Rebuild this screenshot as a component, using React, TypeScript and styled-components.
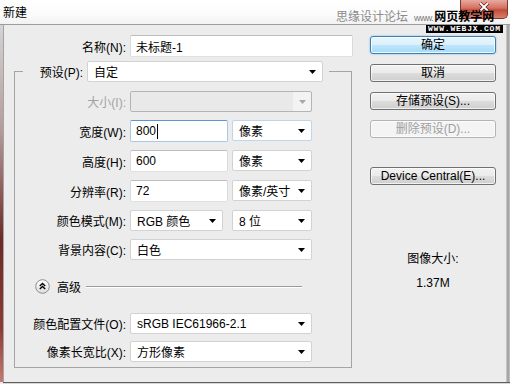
import styled, { createGlobalStyle, css } from "styled-components";

const GlobalStyle = createGlobalStyle`
  html, body { margin: 0; padding: 0; }
  body {
    font-family: "Liberation Sans", "Noto Sans CJK SC", sans-serif;
    font-size: 12px;
    color: #000;
    background: #ececec;
  }
  * { box-sizing: border-box; }
`;

const Window = styled.div`
  position: relative;
  width: 510px;
  height: 384px;
  display: flex;
  flex-direction: column;
  background: #ececec;
  overflow: hidden;
`;

const TitleBar = styled.div`
  flex: none;
  height: 25px;
  display: flex;
  align-items: flex-start;
  padding-left: 3px;
  background: linear-gradient(#ffffff, #fbfbfb 60%, #f2f2f2);
  border-bottom: 1px solid #9c9c9c;
`;

const Title = styled.span`
  line-height: 24px;
  font-size: 12px;
  padding-top: 1px;
`;

const CloseButton = styled.div`
  margin-left: auto;
  margin-right: 2px;
  width: 48px;
  height: 19px;
  display: flex;
  align-items: flex-start;
  justify-content: center;
  padding-top: 2px;
  border: 1px solid #7a3a34;
  border-top: none;
  border-radius: 0 0 5px 5px;
  background: linear-gradient(#e8a99f, #d47060 45%, #c24a38 55%, #d9806c);
`;

const Watermark = styled.div`
  position: absolute;
  left: 336px;
  top: 7px;
  display: flex;
  align-items: baseline;
  white-space: nowrap;
`;

const MarkGrey = styled.span`
  color: #8a8a8a;
  font-size: 12px;
`;

const MarkSmall = styled.span`
  color: #7c7c7c;
  font-size: 9px;
  margin: 0 1px 0 6px;
  letter-spacing: -0.6px;
`;

const MarkBlack = styled.span`
  color: #000;
  font-size: 12px;
  font-weight: bold;
`;

const MarkBar = styled.div`
  position: absolute;
  left: 426px;
  top: 25px;
  height: 8px;
  padding: 0 2px;
  background: #000;
  color: #fff;
  font-family: "Liberation Mono", monospace;
  font-weight: bold;
  font-size: 8px;
  line-height: 8px;
  letter-spacing: 0.8px;
`;

const Frame = styled.div`
  flex: 1;
  display: flex;
  min-height: 0;
`;

const LeftEdge = styled.div`
  flex: none;
  width: 3px;
  background: linear-gradient(#d4d4d4, #b49a98 30%, #6e2a26 60%, #8e3a34 85%, #c67a70);
`;

const RightEdge = styled.div`
  flex: none;
  width: 4px;
  background: linear-gradient(90deg, #d0d0d0, #9a9a9a 50%, #c8c8c8);
`;

const BottomEdge = styled.div`
  flex: none;
  height: 2px;
  margin-left: 3px;
  border-top: 1px solid #5e5e5e;
  background: #d8d8d8;
`;

const Body = styled.div`
  flex: 1;
  display: flex;
  border-left: 1px solid #a4a4a4;
  padding: 10px 0 0 10px;
`;

const LeftCol = styled.div`
  flex: none;
  width: 338px;
  display: flex;
  flex-direction: column;
`;

const Row = styled.div<{ $indent?: number }>`
  display: flex;
  align-items: center;
  gap: 4px;
  padding-left: ${(p) => p.$indent ?? 0}px;
`;

const Label = styled.span<{ $width?: number; $disabled?: boolean }>`
  flex: none;
  width: ${(p) => p.$width ?? 111}px;
  text-align: right;
  white-space: nowrap;
  color: ${(p) => (p.$disabled ? "#a3a3a3" : "#000")};
`;

const Field = styled.div<{ $width: number; $focus?: boolean }>`
  flex: none;
  width: ${(p) => p.$width}px;
  height: 22px;
  display: flex;
  align-items: center;
  padding-left: 5px;
  background: #fff;
  border: 1px solid;
  border-color: ${(p) =>
    p.$focus ? "#5e95cf #a8c8e8 #a8c8e8 #a8c8e8" : "#bdbdbd #dadada #e0e0e0 #dadada"};
  border-radius: 2px;
`;

const Caret = styled.span`
  display: inline-block;
  width: 1px;
  height: 15px;
  margin-left: 1px;
  background: #000;
`;

const Select = styled.div<{ $width: number; $focus?: boolean }>`
  flex: none;
  width: ${(p) => p.$width}px;
  height: 21px;
  display: flex;
  align-items: center;
  justify-content: space-between;
  padding: 0 6px 0 6px;
  background: #fff;
  border: 1px solid ${(p) => (p.$focus ? "#bcd6ec" : "#d2d2d2")};
  border-radius: 2px;
  white-space: nowrap;
`;

const DisabledSelect = styled.div`
  flex: none;
  width: 182px;
  height: 21px;
  display: flex;
  align-items: stretch;
  border: 1px solid #b4b4b4;
  border-radius: 2px;
  background: #f3f3f3;
`;

const DisabledInner = styled.div`
  flex: 1;
  background: #e9e9e9;
`;

const ArrowCell = styled.div`
  flex: none;
  width: 18px;
  display: flex;
  align-items: center;
  justify-content: center;
`;

const Pair = styled.div`
  flex: none;
  width: 182px;
  display: flex;
  justify-content: space-between;
`;

const Group = styled.fieldset`
  margin: 4px 0 0;
  padding: 0 0 5px;
  width: 338px;
  min-width: 0;
  border: 1px solid #a4a4a4;
`;

const Legend = styled.legend`
  margin-left: 8px;
  padding: 0 6px 0 0;
`;

const RowStack = styled.div<{ $gap: number }>`
  display: flex;
  flex-direction: column;
  gap: ${(p) => p.$gap}px;
`;

const GroupInner = styled.div`
  padding-top: 9px;
  display: flex;
  flex-direction: column;
`;

const Advanced = styled.div`
  display: flex;
  align-items: center;
  height: 15px;
  margin: 19px 0;
  padding-left: 20px;
`;

const AdvancedText = styled.span`
  margin-left: 7px;
`;

const Rule = styled.div`
  flex: none;
  width: 216px;
  height: 1px;
  margin-left: 5px;
  background: #9a9a9a;
  box-shadow: 0 1px 0 #fff;
`;

const RightCol = styled.div`
  flex: none;
  width: 126px;
  margin-left: 18px;
  padding-top: 1px;
  display: flex;
  flex-direction: column;
  gap: 10px;
`;

const Button = styled.button<{ $variant?: "primary" | "disabled"; $gapTop?: number }>`
  height: 18px;
  margin: ${(p) => p.$gapTop ?? 0}px 0 0;
  padding: 0;
  font-family: inherit;
  font-size: 12px;
  line-height: 16px;
  color: #000;
  border: 1px solid #707070;
  border-radius: 3px;
  background: linear-gradient(#f2f2f2, #ebebeb 50%, #dddddd 50%, #cfcfcf);
  box-shadow: inset 0 0 0 1px rgba(255, 255, 255, 0.7);
  ${(p) =>
    p.$variant === "primary" &&
    css`
      border-color: #3c7fb1;
      background: linear-gradient(#eaf6fd, #d9f0fc 50%, #bee6fd 50%, #a7d9f5);
      box-shadow: inset 0 0 0 1px rgba(255, 255, 255, 0.8), 0 0 2px #5fb4e6;
    `}
  ${(p) =>
    p.$variant === "disabled" &&
    css`
      color: #a0a0a0;
      border-color: #b0b4b8;
      background: #f4f4f4;
    `}
`;

const Info = styled.div`
  margin-top: 57px;
  display: flex;
  flex-direction: column;
  align-items: center;
  gap: 10px;
  line-height: 14px;
`;

const Arrow = ({ color = "#000" }: { color?: string }) => (
  <svg width="7" height="4" viewBox="0 0 7 4">
    <polygon points="0,0 7,0 3.5,4" fill={color} />
  </svg>
);

const CollapseIcon = () => (
  <svg width="15" height="15" viewBox="0 0 15 15">
    <defs>
      <linearGradient id="cg" x1="0" y1="0" x2="0" y2="1">
        <stop offset="0" stopColor="#ffffff" />
        <stop offset="1" stopColor="#dcdcdc" />
      </linearGradient>
    </defs>
    <circle cx="7.5" cy="7.5" r="6.8" fill="url(#cg)" stroke="#8c8c8c" strokeWidth="1" />
    <polyline points="4.8,7 7.5,4.5 10.2,7" fill="none" stroke="#000" strokeWidth="1.4" />
    <polyline points="4.8,10 7.5,7.5 10.2,10" fill="none" stroke="#000" strokeWidth="1.4" />
  </svg>
);

const CloseGlyph = () => (
  <svg width="12" height="10" viewBox="0 0 12 10">
    <path d="M2 1 L10 9 M10 1 L2 9" stroke="#5a1a14" strokeWidth="3.2" />
    <path d="M2 1 L10 9 M10 1 L2 9" stroke="#fff" strokeWidth="1.8" />
  </svg>
);

const SelectBox = ({ width, value, focus }: { width: number; value: string; focus?: boolean }) => (
  <Select $width={width} $focus={focus}>
    <span>{value}</span>
    <Arrow />
  </Select>
);

export default function App() {
  return (
    <>
      <GlobalStyle />
      <Window>
        <TitleBar>
          <Title>新建</Title>
          <CloseButton>
            <CloseGlyph />
          </CloseButton>
        </TitleBar>
        <Watermark>
          <MarkGrey>思缘设计论坛</MarkGrey>
          <MarkSmall>www.</MarkSmall>
          <MarkBlack>网页教学网</MarkBlack>
        </Watermark>
        <MarkBar>WWW.WEBJX.COM</MarkBar>

        <Frame>
          <LeftEdge />
          <Body>
            <LeftCol>
              <Row $indent={1}>
                <Label>名称(N):</Label>
                <Field $width={223}>未标题-1</Field>
              </Row>

              <Group>
                <Legend>
                  <Row>
                    <Label $width={60}>预设(P):</Label>
                    <SelectBox width={236} value="自定" />
                  </Row>
                </Legend>
                <GroupInner>
                  <RowStack $gap={8}>
                    <Row>
                      <Label $disabled>大小(I):</Label>
                      <DisabledSelect>
                        <DisabledInner />
                        <ArrowCell>
                          <Arrow color="#a8a8a8" />
                        </ArrowCell>
                      </DisabledSelect>
                    </Row>
                    <Row>
                      <Label>宽度(W):</Label>
                      <Pair>
                        <Field $width={98} $focus>
                          800
                          <Caret />
                        </Field>
                        <SelectBox width={80} value="像素" focus />
                      </Pair>
                    </Row>
                    <Row>
                      <Label>高度(H):</Label>
                      <Pair>
                        <Field $width={98}>600</Field>
                        <SelectBox width={80} value="像素" />
                      </Pair>
                    </Row>
                    <Row>
                      <Label>分辨率(R):</Label>
                      <Pair>
                        <Field $width={98}>72</Field>
                        <SelectBox width={80} value="像素/英寸" />
                      </Pair>
                    </Row>
                    <Row>
                      <Label>颜色模式(M):</Label>
                      <Pair>
                        <SelectBox width={93} value="RGB 颜色" />
                        <SelectBox width={80} value="8 位" />
                      </Pair>
                    </Row>
                    <Row>
                      <Label>背景内容(C):</Label>
                      <SelectBox width={182} value="白色" />
                    </Row>
                  </RowStack>

                  <Advanced>
                    <CollapseIcon />
                    <AdvancedText>高级</AdvancedText>
                    <Rule />
                  </Advanced>

                  <RowStack $gap={7}>
                    <Row>
                      <Label>颜色配置文件(O):</Label>
                      <SelectBox width={182} value="sRGB IEC61966-2.1" />
                    </Row>
                    <Row>
                      <Label>像素长宽比(X):</Label>
                      <SelectBox width={182} value="方形像素" />
                    </Row>
                  </RowStack>
                </GroupInner>
              </Group>
            </LeftCol>

            <RightCol>
              <Button $variant="primary">确定</Button>
              <Button>取消</Button>
              <Button>存储预设(S)...</Button>
              <Button $variant="disabled">删除预设(D)...</Button>
              <Button $gapTop={19}>Device Central(E)...</Button>
              <Info>
                <span>图像大小:</span>
                <span>1.37M</span>
              </Info>
            </RightCol>
          </Body>
          <RightEdge />
        </Frame>
        <BottomEdge />
      </Window>
    </>
  );
}
